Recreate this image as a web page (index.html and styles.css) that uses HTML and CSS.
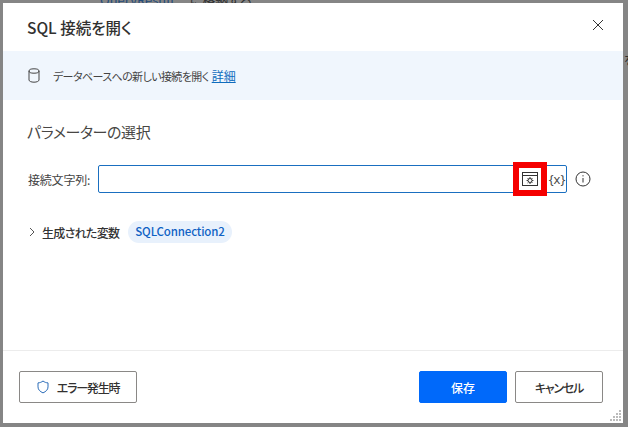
FILE: index.html
```html
<!DOCTYPE html>
<html lang="ja">
<head>
  <meta charset="UTF-8">
  <title>SQL 接続を開く</title>
  <link rel="stylesheet" href="styles.css">
</head>
<body>
  <div class="behind behind-top"><span class="behind-link">QueryResult</span> <span>に格納する</span></div>
  <div class="behind behind-right">をe</div>

  <div class="dialog">
    <div class="dialog-head">
      <h1 class="dialog-title">SQL 接続を開く</h1>
      <svg class="close-icon" width="12" height="12" viewBox="0 0 12 12"><path d="M1 1l10 10M11 1L1 11" stroke="#333" stroke-width="1" fill="none"/></svg>
    </div>

    <div class="banner">
      <svg class="db-icon" width="12" height="15" viewBox="0 0 12 15" fill="none" stroke="#444" stroke-width="1"><ellipse cx="6" cy="3" rx="5" ry="2.2"/><path d="M1 3v9c0 1.2 2.2 2.2 5 2.2s5-1 5-2.2V3"/></svg>
      <span class="banner-text">データベースへの新しい接続を開く</span>
      <a class="banner-link" href="#">詳細</a>
    </div>

    <div class="dialog-body">
      <h2 class="section-title">パラメーターの選択</h2>

      <div class="field-row">
        <label class="field-label">接続文字列:</label>
        <div class="field-input">
          <div class="input-space"></div>
          <div class="picker">
            <svg width="16" height="16" viewBox="0 0 16 16" fill="none" stroke="#333" stroke-width="1"><rect x="0.5" y="1.5" width="15" height="13"/><path d="M0.5 4.5h15"/><circle cx="8" cy="9.5" r="2"/><path d="M8 6v1.3M8 11.7V13M4.6 9.5h1.3M10.1 9.5h1.3M5.6 7.1l.9.9M9.5 11l.9.9M10.4 7.1l-.9.9M6.5 11l-.9.9"/></svg>
            <div class="picker-mark"></div>
          </div>
          <div class="var-btn">{x}</div>
        </div>
        <svg class="info-icon" width="16" height="16" viewBox="0 0 16 16" fill="none" stroke="#333" stroke-width="1"><circle cx="8" cy="8" r="7"/><path d="M8 7v4.5"/><path d="M8 4.2v1.2"/></svg>
      </div>

      <div class="vars-row">
        <svg class="chevron" width="6" height="10" viewBox="0 0 6 10" fill="none" stroke="#555" stroke-width="1"><path d="M1 1l4 4-4 4"/></svg>
        <span class="vars-label">生成された変数</span>
        <span class="var-chip">SQLConnection2</span>
      </div>
    </div>

    <div class="dialog-foot">
      <button class="btn btn-error">
        <svg width="12" height="14" viewBox="0 0 12 14" fill="none" stroke="#2b6cb8" stroke-width="1"><path d="M6 1c1.500 1.200 3.200 1.800 5 1.900v4c0 2.800-2 4.600-5 6-3-1.400-5-3.200-5-6v-4C2.800 2.800 4.500 2.200 6 1z"/></svg>
        <span class="btn-text">エラー発生時</span>
      </button>
      <div class="foot-right">
        <button class="btn btn-save">保存</button>
        <button class="btn btn-cancel"><span class="btn-text">キャンセル</span></button>
      </div>
    </div>

    <svg class="grip" width="12" height="12" viewBox="0 0 12 12" fill="#bbb"><rect x="9" y="0" width="2" height="2"/><rect x="6" y="3" width="2" height="2"/><rect x="9" y="3" width="2" height="2"/><rect x="3" y="6" width="2" height="2"/><rect x="6" y="6" width="2" height="2"/><rect x="9" y="6" width="2" height="2"/><rect x="0" y="9" width="2" height="2"/><rect x="3" y="9" width="2" height="2"/><rect x="6" y="9" width="2" height="2"/><rect x="9" y="9" width="2" height="2"/></svg>
  </div>
</body>
</html>
```

FILE: styles.css
```css
html, body {
  margin: 0;
  padding: 0;
}
body {
  width: 628px;
  height: 427px;
  overflow: hidden;
  position: relative;
  background-color: #858585;
  font-family: "Noto Sans CJK JP", "Noto Sans", sans-serif;
  font-feature-settings: "palt";
  color: #323130;
}
.behind {
  position: absolute;
  font-size: 13px;
  color: #2f2f2f;
}
.behind-top {
  top: -9px;
  left: 100px;
  line-height: 18px;
}
.behind-link {
  color: #234b7a;
  margin-right: 12px;
}
.behind-right {
  top: 38px;
  left: 624px;
  width: 4px;
  overflow: hidden;
  line-height: 44px;
  white-space: nowrap;
}
.dialog {
  position: absolute; /* sits over the page behind it */
  top: 3px;
  left: 3px;
  width: 620px;
  height: 420px;
  background-color: #fff;
  display: flex;
  flex-direction: column;
}
.dialog-head {
  height: 48px;
  padding: 0 19px 0 24px;
  display: flex;
  align-items: center;
  justify-content: space-between;
  box-sizing: border-box;
}
.dialog-title {
  margin: 0;
  font-size: 15.500px;
  font-weight: 500;
  line-height: 50px;
}
.close-icon {
  margin-top: -4px;
}
.banner {
  height: 49px;
  padding: 0 0 0 25px;
  background-color: #f0f6fd;
  display: flex;
  align-items: center;
  font-size: 12px;
  color: #444;
  box-sizing: border-box;
}
.db-icon {
  margin-right: 13px;
}
.banner-text {
  font-size: 11px;
  letter-spacing: -0.6px;
}
.banner-link {
  color: #0f6cbd;
  margin-left: 3px;
}
.dialog-body {
  flex: 1;
  padding: 0 25px;
}
.section-title {
  margin: 20px 0 0 -1px;
  font-size: 15px;
  letter-spacing: -0.4px;
  font-weight: 400;
  line-height: 24px;
  color: #484644;
}
.field-row {
  margin-top: 21px;
  display: flex;
  align-items: center;
}
.field-label {
  width: 70px;
  font-size: 12px;
  letter-spacing: -0.2px;
  color: #444;
}
.field-input {
  width: 469px;
  height: 28px;
  border: 1px solid #1a6fc0;
  border-radius: 2px;
  display: flex;
  align-items: center;
  box-sizing: border-box;
}
.input-space {
  flex: 1;
}
.picker {
  width: 34px;
  height: 34px;
  margin-right: 1px;
  position: relative;
  display: flex;
  align-items: center;
  justify-content: center;
  background-color: #fff;
}
.picker-mark {
  position: absolute; /* red callout over the button */
  inset: 0;
  border: 6px solid #f50000;
}
.var-btn {
  width: 18px;
  font-size: 13px;
  color: #444;
  text-align: center;
  font-family: "Open Sans", sans-serif;
}
.info-icon {
  margin-left: 8px;
}
.vars-row {
  margin-top: 28px;
  display: flex;
  align-items: center;
  font-size: 12px;
}
.chevron {
  margin-left: 1px;
}
.vars-label {
  margin-left: 7px;
  font-weight: 500;
  letter-spacing: -0.7px;
  color: #333;
}
.var-chip {
  margin-left: 9px;
  height: 22px;
  padding: 0 7px;
  border-radius: 11px;
  background-color: #e8f1fc;
  color: #0f62c4;
  font-size: 11.500px;
  letter-spacing: -0.15px;
  font-weight: 500;
  line-height: 21px;
}
.dialog-foot {
  height: 73px;
  border-top: 1px solid #ececec;
  padding: 20px 20px 0 16px;
  display: flex;
  justify-content: space-between;
  box-sizing: border-box;
}
.foot-right {
  display: flex;
  gap: 8px;
}
.btn {
  height: 32px;
  border: 1px solid #8a8886;
  border-radius: 2px;
  background-color: #fff;
  font-family: inherit;
  font-feature-settings: inherit;
  font-size: 12px;
  font-weight: 500;
  color: #323130;
  padding: 0;
  display: flex;
  align-items: center;
  justify-content: center;
  box-sizing: border-box;
}
.btn-text {
  letter-spacing: -1.2px;
}
.btn-error {
  width: 118px;
  gap: 8px;
}
.btn-save {
  width: 88px;
  background-color: #0069fa;
  border-color: #0069fa;
  color: #fff;
}
.btn-cancel {
  width: 88px;
}
.grip {
  position: absolute; /* resize handle in the corner */
  right: 1px;
  bottom: 1px;
}
```
